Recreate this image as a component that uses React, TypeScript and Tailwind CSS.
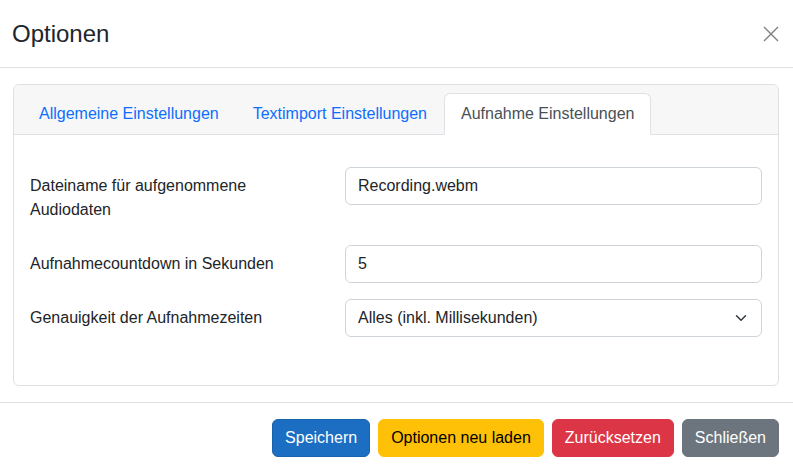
import React from "react";

const tabs = [
  { label: "Allgemeine Einstellungen", active: false },
  { label: "Textimport Einstellungen", active: false },
  { label: "Aufnahme Einstellungen", active: true },
];

export default function App() {
  return (
    <div className="w-[793px] h-[471px] bg-white text-[16px] leading-6 text-[#212529] font-['Liberation_Sans',Arial,sans-serif] flex flex-col">
      {/* Header */}
      <div className="h-[68px] shrink-0 flex items-center justify-between pl-[12px] pr-[14px] border-b border-[#dee2e6]">
        <h5 className="text-[24px] leading-[30px] font-normal">Optionen</h5>
        <button className="w-4 h-4 flex items-center justify-center opacity-50" aria-label="Close">
          <svg width="16" height="16" viewBox="0 0 16 16">
            <path d="M1 1 L15 15 M15 1 L1 15" stroke="#000" strokeWidth="1.4" fill="none" />
          </svg>
        </button>
      </div>

      {/* Body */}
      <div className="pt-4 pb-4 pl-[13px] pr-[14px]">
        <div className="border border-[#dfe0e1] rounded-[6px]">
          <div className="bg-[#f7f7f7] border-b border-[#dee2e6] rounded-t-[6px] pt-2 px-2 flex">
            {tabs.map((t) => (
              <div
                key={t.label}
                className={
                  t.active
                    ? "px-4 py-2 border border-[#dee2e6] border-b-white bg-white rounded-t-[6px] text-[#495057] -mb-px"
                    : "px-4 py-2 border border-transparent text-[#0d6efd] -mb-px"
                }
              >
                {t.label}
              </div>
            ))}
          </div>
          <div className="px-4 pt-8 pb-12">
            <Row label={<>Dateiname für aufgenommene<br />Audiodaten</>}>
              <Input value="Recording.webm" />
            </Row>
            <Row label="Aufnahmecountdown in Sekunden">
              <Input value="5" />
            </Row>
            <Row label="Genauigkeit der Aufnahmezeiten" last>
              <div className="h-[38px] border border-[#ced4da] rounded-[6px] flex items-center justify-between pl-3 pr-3">
                <span>Alles (inkl. Millisekunden)</span>
                <svg width="16" height="12" viewBox="0 0 16 16">
                  <path d="m2 5 6 6 6-6" fill="none" stroke="#343a40" strokeWidth="2" strokeLinecap="round" strokeLinejoin="round" />
                </svg>
              </div>
            </Row>
          </div>
        </div>
      </div>

      {/* Footer */}
      <div className="border-t border-[#dee2e6] pt-4 pr-[14px] flex justify-end gap-2">
        <button className="h-[38px] px-3 rounded-[6px] border border-[#1861ac] bg-[#1b6ec2] text-white">Speichern</button>
        <button className="h-[38px] px-3 rounded-[6px] border border-[#ffc107] bg-[#ffc107] text-black">Optionen neu laden</button>
        <button className="h-[38px] px-3 rounded-[6px] border border-[#dc3545] bg-[#dc3545] text-white">Zurücksetzen</button>
        <button className="h-[38px] px-3 rounded-[6px] border border-[#6c757d] bg-[#6c757d] text-white">Schließen</button>
      </div>
    </div>
  );
}

function Row({ label, children, last }: { label: React.ReactNode; children: React.ReactNode; last?: boolean }) {
  return (
    <div className={last ? "flex" : "flex mb-4"}>
      <label className="w-[315px] shrink-0 pt-[7px] pb-[7px] pr-6">{label}</label>
      <div className="flex-1">{children}</div>
    </div>
  );
}

function Input({ value }: { value: string }) {
  return (
    <div className="h-[38px] border border-[#ced4da] rounded-[6px] flex items-center px-3">
      {value}
    </div>
  );
}
